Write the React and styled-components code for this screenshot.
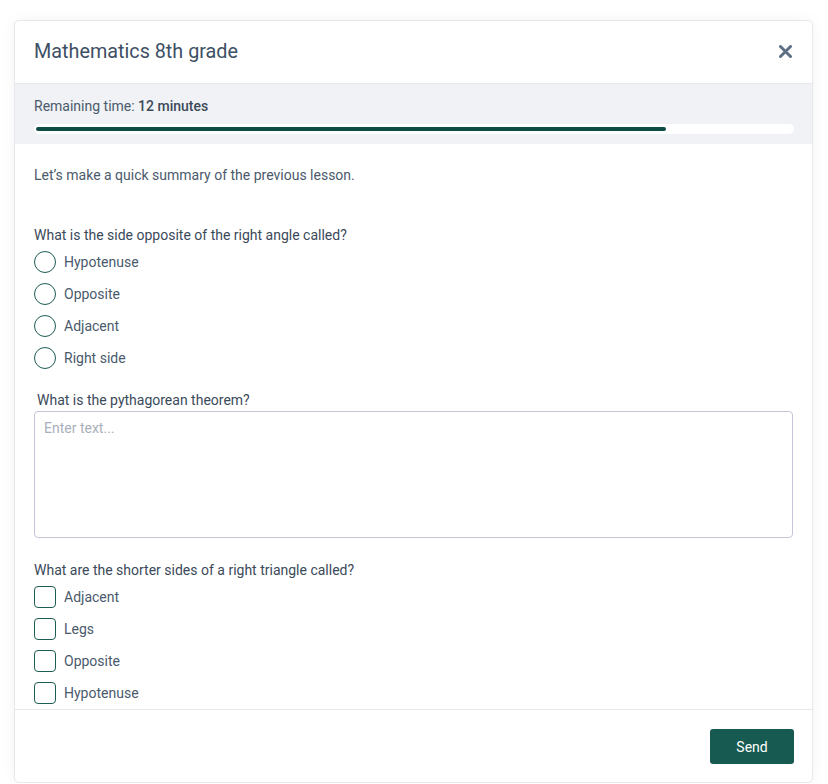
import React from 'react'
import styled, { createGlobalStyle } from 'styled-components'

const GlobalStyle = createGlobalStyle`
    html, body {
        margin: 0;
        padding: 0;
        background: #ffffff;
        font-family: Roboto, 'Liberation Sans', sans-serif;
    }
`;

const Card = styled.div`
    margin: 20px 0 0 14px;
    width: 799px;
    height: 763px;
    box-sizing: border-box;
    border: 1px solid #e6e8ec;
    border-radius: 5px;
    background: #ffffff;
    box-shadow: 0 0 14px rgba(30, 40, 60, 0.05);
    display: flex;
    flex-direction: column;
    overflow: hidden;
`;

const Header = styled.div`
    height: 63px;
    flex-shrink: 0;
    display: flex;
    align-items: center;
    justify-content: space-between;
    padding: 0 19px 2px 19px;
    box-sizing: border-box;
    border-bottom: 1px solid #e6e8ec;
`;

const Title = styled.h1`
    margin: 0;
    font-size: 19.8px;
    font-weight: 400;
    color: #3e5064;
`;

const Close = styled.button`
    border: none;
    background: none;
    padding: 0;
    width: 16px;
    height: 16px;
    display: flex;
    align-items: center;
    justify-content: center;
    cursor: pointer;
`;

const TimerBar = styled.div`
    height: 60px;
    flex-shrink: 0;
    background: #f0f2f5;
    padding: 12px 18px 0 19px;
    box-sizing: border-box;
`;

const TimerText = styled.div`
    font-size: 14px;
    line-height: 20px;
    color: #4a5a6c;

    b {
        font-weight: 500;
        color: #3b4a5a;
    }
`;

const Track = styled.div`
    margin-top: 8px;
    height: 10px;
    border-radius: 5px;
    background: #ffffff;
    display: flex;
    align-items: center;
    padding: 0 2px;
`;

const Fill = styled.div`
    height: 4px;
    border-radius: 2px;
    background: #0f4b45;
`;

const Body = styled.div`
    flex: 1;
    overflow: hidden;
    padding: 21px 19px 0 19px;
    display: flex;
    flex-direction: column;
`;

const Intro = styled.p`
    margin: 0 0 40px 0;
    font-size: 14px;
    line-height: 20px;
    color: #4a5a6c;
`;

const Question = styled.div`
    display: flex;
    flex-direction: column;
    margin-bottom: ${(props) => props.gap || 0}px;
`;

const Label = styled.div`
    font-size: 14px;
    line-height: 20px;
    color: #3b4a5a;
    padding-left: ${(props) => (props.indent ? '3px' : '0')};
    margin-bottom: ${(props) => (props.tight ? '1px' : '6px')};
`;

const Options = styled.div`
    display: flex;
    flex-direction: column;
    row-gap: 10px;
`;

const Option = styled.label`
    display: flex;
    align-items: center;
    column-gap: 8px;
    height: 22px;
    font-size: 14px;
    color: #4a5a6c;
`;

const Mark = styled.span`
    width: 22px;
    height: 22px;
    box-sizing: border-box;
    border: 1.5px solid #1d5c54;
    border-radius: ${(props) => (props.round ? '50%' : '4px')};
    flex-shrink: 0;
`;

const TextArea = styled.textarea`
    height: 127px;
    box-sizing: border-box;
    border: 1px solid #c4c5d8;
    border-radius: 4px;
    padding: 7px 9px;
    resize: none;
    font-family: Roboto, 'Liberation Sans', sans-serif;
    font-size: 14px;
    line-height: 18px;
    color: #3b4a5a;

    &::placeholder {
        color: #a9b0bb;
    }
`;

const Footer = styled.div`
    height: 73px;
    flex-shrink: 0;
    border-top: 1px solid #e6e8ec;
    display: flex;
    align-items: flex-start;
    justify-content: flex-end;
    padding: 19px 18px 0 0;
    box-sizing: border-box;
`;

const SendButton = styled.button`
    width: 84px;
    height: 35px;
    border: none;
    border-radius: 3px;
    background: #175a52;
    color: #ffffff;
    font-family: Roboto, 'Liberation Sans', sans-serif;
    font-size: 14px;
    cursor: pointer;
`;

const radioOptions = ['Hypotenuse', 'Opposite', 'Adjacent', 'Right side'];
const checkOptions = ['Adjacent', 'Legs', 'Opposite', 'Hypotenuse'];

export default function App() {
    const progress = 630 / 756;

    return (
        <>
            <GlobalStyle />
            <Card>
                <Header>
                    <Title>Mathematics 8th grade</Title>
                    <Close aria-label="Close">
                        <svg width="13" height="13" viewBox="0 0 13 13">
                            <path d="M1.5 1.5 L11.5 11.5 M11.5 1.5 L1.5 11.5" stroke="#5d6f84" strokeWidth="3" strokeLinecap="round" />
                        </svg>
                    </Close>
                </Header>
                <TimerBar>
                    <TimerText>Remaining time: <b>12 minutes</b></TimerText>
                    <Track>
                        <Fill style={{ width: `${progress * 100}%` }} />
                    </Track>
                </TimerBar>
                <Body>
                    <Intro>Let’s make a quick summary of the previous lesson.</Intro>
                    <Question gap={21}>
                        <Label>What is the side opposite of the right angle called?</Label>
                        <Options>
                            {radioOptions.map((o) => (
                                <Option key={o}><Mark round />{o}</Option>
                            ))}
                        </Options>
                    </Question>
                    <Question gap={22}>
                        <Label indent tight>What is the pythagorean theorem?</Label>
                        <TextArea placeholder="Enter text..." />
                    </Question>
                    <Question>
                        <Label>What are the shorter sides of a right triangle called?</Label>
                        <Options>
                            {checkOptions.map((o) => (
                                <Option key={o}><Mark />{o}</Option>
                            ))}
                        </Options>
                    </Question>
                </Body>
                <Footer>
                    <SendButton>Send</SendButton>
                </Footer>
            </Card>
        </>
    )
}
